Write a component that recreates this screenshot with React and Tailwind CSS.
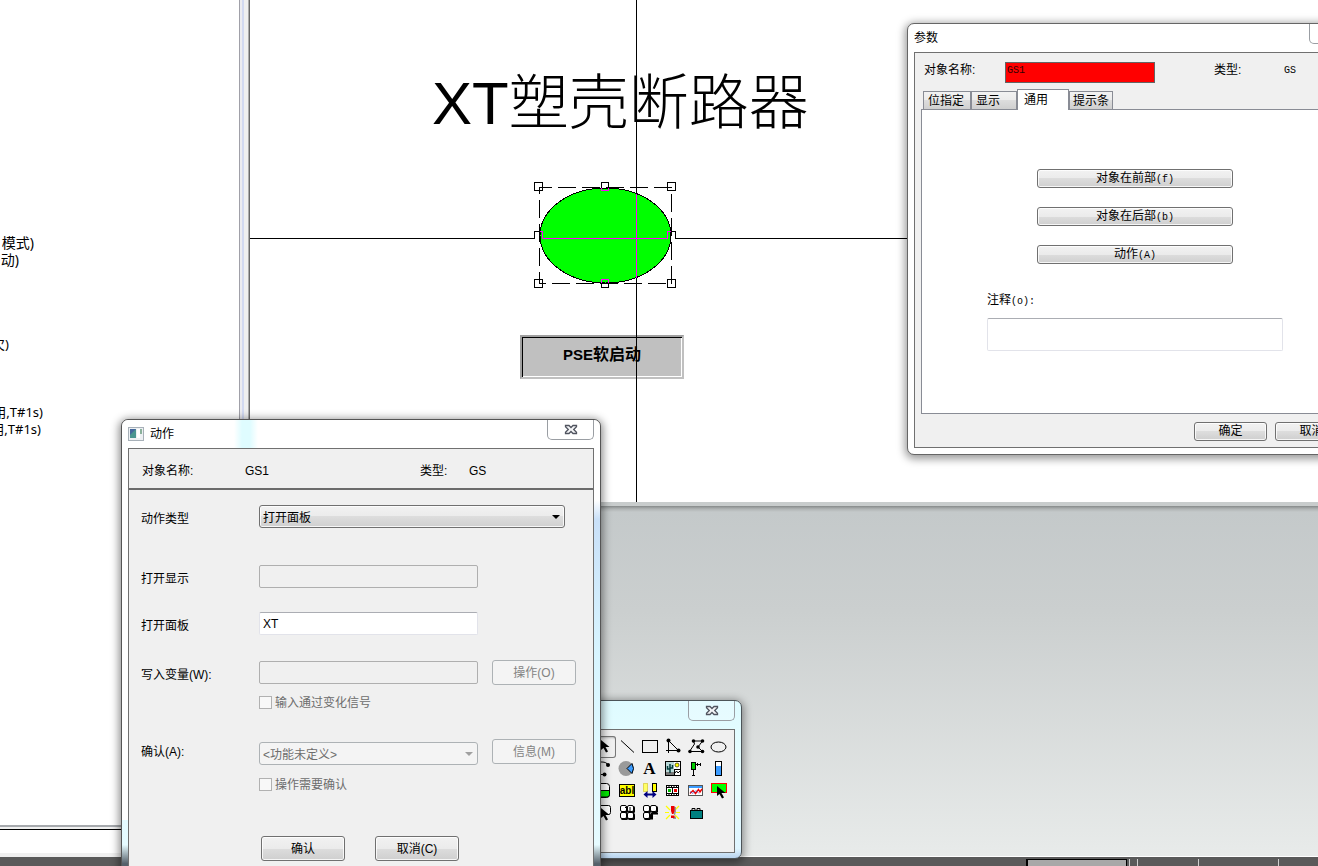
import React from "react";

const codeLines = [
  { text: "模式)", width: "w-[34px] text-sm leading-[17px]" },
  { text: "动)", width: "w-[19px] text-sm leading-[17px]" },
  null,
  null,
  null,
  null,
  { text: "欠)", width: "w-[9px]" },
  null,
  null,
  null,
  { text: "用,T#1s)", width: "w-[43px]" },
  { text: "用,T#1s)", width: "w-[41px]" },
];

const ARROW = "M0 0v10l2.500-2 2.500 4.500 2-1-2.500-4.500h4z";

function Pointer({ x, y }) {
  return <path d={ARROW} transform={`translate(${x} ${y})`} fill="#000" />;
}

function Tiles() {
  return (
    <g>
      <g fill="#000">
        <rect x="5" y="4" width="7" height="7" rx="1.500" />
        <rect x="12" y="4" width="7" height="7" rx="1.500" />
        <rect x="5" y="11" width="7" height="7" rx="1.500" />
      </g>
      <g fill="#fff" stroke="#000">
        <rect x="4.500" y="3.500" width="6" height="6" rx="1.500" />
        <rect x="11.500" y="3.500" width="6" height="6" rx="1.500" />
        <rect x="4.500" y="10.500" width="6" height="6" rx="1.500" />
      </g>
    </g>
  );
}

const tools = [
  {
    name: "选择",
    active: true,
    art: <Pointer x={8} y={4} />,
  },
  { name: "直线", art: <path d="M5 4.500 18 16.500" stroke="#000" /> },
  { name: "矩形", art: <rect x="3.500" y="4.500" width="15" height="12" fill="none" stroke="#000" /> },
  {
    name: "折线",
    art: (
      <g>
        <path d="M6.500 4v13M4 14.500h14M6.500 4.500l10 10" stroke="#000" fill="none" />
        <circle cx="6.500" cy="4.500" r="2" />
        <circle cx="16.500" cy="14.500" r="2" />
      </g>
    ),
  },
  {
    name: "多边形",
    art: (
      <g>
        <path d="M17.500 5H8.500l1 3-5 7.500h13L13 11z" stroke="#000" fill="none" />
        <circle cx="8.500" cy="5" r="1.800" />
        <circle cx="17.500" cy="5" r="1.800" />
        <circle cx="13" cy="11" r="1.800" />
        <circle cx="17.500" cy="15.500" r="1.800" />
        <circle cx="5" cy="15.500" r="1.800" />
      </g>
    ),
  },
  { name: "椭圆", art: <ellipse cx="10.500" cy="11" rx="7.500" ry="5" fill="none" stroke="#000" /> },
  {
    name: "圆弧",
    art: (
      <g>
        <path d="M5 4h4c3 0 5 1 6 3M5 16.500h6" stroke="#000" fill="none" />
        <circle cx="15" cy="7" r="2" />
        <circle cx="11.500" cy="16.500" r="2" />
      </g>
    ),
  },
  {
    name: "扇形",
    art: (
      <g>
        <circle cx="10" cy="10.500" r="7.500" fill="#9a9a9a" />
        <path d="M11 10.500 16 5.500q3 5 0 10z" fill="#3b9bff" stroke="#000" />
      </g>
    ),
  },
  {
    name: "文本",
    art: (
      <text x="10.500" y="16" textAnchor="middle" className="font-['Liberation_Serif',serif] text-[17px] font-bold">
        A
      </text>
    ),
  },
  {
    name: "图片",
    art: (
      <g>
        <rect x="3.500" y="3.500" width="15" height="14" fill="#fff" stroke="#000" />
        <path d="M4 4h8v10H4z" fill="#b8d8d8" />
        <path d="M4 14h8v3H4z" fill="#777" />
        <path d="M8 15V6M5.500 8v3H8M10.500 7v3H8" stroke="#003c3c" strokeWidth="1.500" fill="none" />
        <circle cx="15" cy="7" r="2" fill="#ff0" stroke="#000" strokeWidth=".6" />
        <path d="M12.500 11v6M12 11.500h6M13 15l1.500-2 1.500 2 2-2" stroke="#000" fill="none" />
      </g>
    ),
  },
  {
    name: "阀门",
    art: (
      <g>
        <path d="M8.500 10v7M7 17.500h3M10 6.500h6M12.500 5v3M15.500 5v3" stroke="#000" fill="none" />
        <rect x="6.500" y="4.500" width="4" height="7" fill="#0c0" stroke="#000" />
      </g>
    ),
  },
  {
    name: "棒图",
    art: (
      <g>
        <rect x="7.500" y="3.500" width="6" height="14" fill="#fff" stroke="#000" />
        <path d="M8 8h5v9H8z" fill="#3b9bff" />
      </g>
    ),
  },
  {
    name: "按钮",
    art: (
      <g>
        <rect x="2.500" y="3.500" width="14" height="14" rx="3" fill="#fff" stroke="#000" />
        <path d="M3 10.500h13.500v4q0 2.500-2.500 2.500H3z" fill="#0e0" stroke="#000" />
      </g>
    ),
  },
  {
    name: "输入框",
    art: (
      <g>
        <rect x="3.500" y="4.500" width="15" height="12" fill="#ff0" stroke="#000" />
        <text x="11" y="14" textAnchor="middle" className="font-['Liberation_Sans',sans-serif] text-[10px] font-bold">
          abl
        </text>
      </g>
    ),
  },
  {
    name: "移动",
    art: (
      <g>
        <rect x="4.500" y="3.500" width="4" height="8" fill="#ff6" stroke="#c8b400" strokeDasharray="1 1" />
        <rect x="13.500" y="3.500" width="4" height="8" fill="#ff0" stroke="#000" />
        <path d="m4.500 14.500 4-3.500v2.500h5V11l4 3.500-4 3.500v-2.500h-5V18z" fill="#000080" />
      </g>
    ),
  },
  {
    name: "动画",
    art: (
      <g>
        <path d="M4 5h13v11H4z" fill="#000" />
        <path d="M5 6.500h11M5 14.500h11" stroke="#fff" strokeDasharray="1.500 1" />
        <path d="M5 8h5v5H5zM11 8h5v5h-5z" fill="#fff" />
        <path d="M6 9h3v3H6z" fill="#0b0" />
        <path d="M12 9h3v3h-3z" fill="#e00" />
      </g>
    ),
  },
  {
    name: "趋势",
    art: (
      <g>
        <rect x="3.500" y="5.500" width="14" height="10" fill="#fff" stroke="#555" />
        <path d="M4 6h13v2H4z" fill="#3b9bff" />
        <path d="m5 13.500 3-3 2.500 3 3-4 1.500 2.500 2-3" stroke="#e00" strokeWidth="1.400" fill="none" />
        <path d="m5 11.500 3 2 3-3 3 3" stroke="#24c" strokeWidth=".6" fill="none" />
      </g>
    ),
  },
  {
    name: "触发区",
    art: (
      <g>
        <rect x="3.500" y="3.500" width="15" height="9" fill="#0f0" stroke="#f00" />
        <Pointer x={9} y={6} />
      </g>
    ),
  },
  {
    name: "点击按钮",
    art: (
      <g>
        <rect x="2.500" y="3.500" width="15" height="9" rx="2" fill="#fff" stroke="#000" />
        <Pointer x={8} y={6} />
      </g>
    ),
  },
  {
    name: "单选组",
    art: (
      <g>
        <Tiles />
        <rect x="12" y="11" width="7" height="7" rx="1.500" fill="#000" />
        <rect x="11.500" y="10.500" width="6" height="6" rx="1.500" fill="#fff" stroke="#000" />
        <path d="m9 5 3 3-3 2M14 5v4" stroke="#000" fill="none" />
      </g>
    ),
  },
  {
    name: "复选组",
    art: (
      <g>
        <Tiles />
        <path d="M12 11h7v1.500h-5v5h-2z" fill="#000" />
        <path d="M15 13.500h3M15 15.500h2" stroke="#fff" />
      </g>
    ),
  },
  {
    name: "报警",
    art: (
      <g>
        <path
          d="m4 4 4 4M17 4l-4 4M3 10.500h4M14 10.500h4M4 17l4-4M17 17l-4-4"
          stroke="#ff0"
          strokeWidth="1.200"
        />
        <path d="M11 5h3v5l-1 3h-1zM11 14.500h3V17h-3z" fill="#999" />
        <path d="M9 4h3.500v5l-1 3h-1.500l-1-3zM9 13.500h3.500V16H9z" fill="#e00" />
      </g>
    ),
  },
  {
    name: "工具箱",
    art: (
      <g>
        <path d="M7 8.500v-2h3v2M12 8.500v-2h3v2" fill="#ddd" stroke="#000" />
        <rect x="5.500" y="8.500" width="12" height="8" fill="#008080" stroke="#000" />
      </g>
    ),
  },
];

function CloseButton() {
  return (
    <button
      type="button"
      aria-label="关闭"
      className="flex h-5 w-[47px] items-center justify-center rounded-b-[5px] border border-t-0 border-[#9a9ea3] bg-white/20"
    >
      <svg width="14" height="11" viewBox="0 0 14 11">
        <path
          d="M1.500 1.500H5L7 3.500 9 1.500h3.500v1.200L9.700 5.500l2.800 2.800v1.200H9L7 7.500 5 9.500H1.500V8.300L4.300 5.500 1.500 2.700z"
          fill="#f4f5f7"
          stroke="#50545f"
          strokeWidth="1.300"
        />
      </svg>
    </button>
  );
}

const buttonFace =
  "rounded-[3px] border border-[#707070] bg-[linear-gradient(#f2f2f2_0%,#ebebeb_50%,#dddddd_50%,#cfcfcf_100%)] shadow-[inset_0_0_0_1px_rgba(255,255,255,0.8)]";
const buttonOff = "rounded-[3px] border border-[#adb2b5] bg-[#f4f4f4] text-[#838383]";

function Mono({ children }) {
  return <span className="font-['Liberation_Mono',monospace] text-[10px]">{children}</span>;
}

function ParamsWindow() {
  return (
    <section className="absolute left-[907px] top-[23px] w-[456px] rounded-[7px] border border-[#666] bg-white px-[6px] pb-[6px] text-xs shadow-[0_2px_8px_2px_rgba(0,0,0,0.4)]">
      <header className="flex h-7 items-start justify-between">
        <h2 className="leading-7">参数</h2>
        <CloseButton />
      </header>
      <div className="border border-[#707070] bg-[#f0f0f0] pb-[6px]">
        <div className="flex h-[30px] items-center pl-[9px] pt-[9px]">
          <label htmlFor="object-name" className="w-[81px] pb-[6px]">
            对象名称:
          </label>
          <input
            id="object-name"
            defaultValue="GS1"
            className="h-[21px] w-[150px] border border-[#646464] bg-[#f00] px-px pb-1 font-['Liberation_Mono',monospace] text-[10px] text-[#300]"
          />
          <span className="ml-[59px] w-[70px] pb-[6px]">类型:</span>
          <span className="pb-[6px]">
            <Mono>GS</Mono>
          </span>
        </div>
        <div role="tablist" className="mt-[6px] flex h-5 items-end pl-2">
          {[
            ["位指定", "w-[48px]"],
            ["显示", "w-[46px]"],
          ].map(([name, width]) => (
            <button
              key={name}
              type="button"
              role="tab"
              className={`${width} h-[18px] border border-b-0 border-[#898c95] bg-[linear-gradient(#f2f2f2_0%,#ebebeb_50%,#dddddd_50%,#cfcfcf_100%)] px-1 text-left`}
            >
              {name}
            </button>
          ))}
          <button
            type="button"
            role="tab"
            aria-selected="true"
            className="z-10 -mb-px h-[21px] w-[52px] border border-b-0 border-[#898c95] bg-white px-[6px] text-left"
          >
            通用
          </button>
          <button
            type="button"
            role="tab"
            className="h-[18px] w-[44px] border border-b-0 border-[#898c95] bg-[linear-gradient(#f2f2f2_0%,#ebebeb_50%,#dddddd_50%,#cfcfcf_100%)] px-[3px] text-left"
          >
            提示条
          </button>
        </div>
        <div
          role="tabpanel"
          className="mx-[6px] flex flex-col items-center border border-[#898c95] bg-white pb-[62px] pt-[59px]"
        >
          <div className="flex w-[196px] flex-col gap-[19px]">
            {[
              ["对象在前部", "(f)"],
              ["对象在后部", "(b)"],
              ["动作", "(A)"],
            ].map(([name, key]) => (
              <button key={key} type="button" className={`${buttonFace} h-[19px] leading-[17px]`}>
                {name}
                <Mono>{key}</Mono>
              </button>
            ))}
          </div>
          <div className="mt-[27px] flex w-[296px] flex-col gap-[7px]">
            <label htmlFor="comment" className="leading-[18px]">
              注释<Mono>(o):</Mono>
            </label>
            <input
              id="comment"
              className="h-[33px] rounded-[2px] border border-[#e2e3ea] border-t-[#abadb3] bg-white px-1"
            />
          </div>
        </div>
        <div className="mt-2 flex justify-end gap-2 pr-[7px]">
          <button type="button" className={`${buttonFace} h-[19px] w-[73px] leading-[17px]`}>
            确定
          </button>
          <button type="button" className={`${buttonFace} h-[19px] w-[73px] leading-[17px]`}>
            取消
          </button>
        </div>
      </div>
    </section>
  );
}

function ToolWindow() {
  return (
    <section className="absolute left-[580px] top-[700px] w-[162px] rounded-[7px] border border-[#4c5458] bg-[linear-gradient(#dffbff_0%,#e8feff_50%,#dff5ff_94%,#b9d3ee_100%)] px-[6px] pb-[5px] shadow-[0_2px_8px_2px_rgba(0,0,0,0.4)]">
      <header className="flex h-7 justify-end">
        <CloseButton />
      </header>
      <div className="grid grid-cols-[repeat(6,23px)] border border-[#707070] bg-[#f0f0f0] pb-[28px] pl-[5px] pt-[6px]">
        {tools.map((tool) => (
          <button
            key={tool.name}
            type="button"
            aria-label={tool.name}
            className={
              tool.active
                ? "h-[22px] rounded-[3px] shadow-[inset_0_0_0_1px_#777,inset_0_2px_2px_#bbb]"
                : "h-[22px]"
            }
          >
            <svg width="23" height="22" viewBox="0 0 23 22">
              {tool.art}
            </svg>
          </button>
        ))}
      </div>
    </section>
  );
}

const fieldOff = "h-[23px] w-[219px] rounded-[2px] border border-[#afafaf] bg-[#f0f0f0] px-[3px]";

function ActionWindow() {
  return (
    <section className="absolute left-[121px] top-[419px] w-[480px] rounded-[7px] border border-[#555] bg-white bg-[linear-gradient(90deg,#fff_50%,transparent_50%),linear-gradient(#ffffff_0%,#ffffff_17%,#c9e0f8_21%,#d8f5ff_50%,#e6fbff_90%,#55606a_94%)] bg-[length:100%_400px,100%_100%] bg-no-repeat px-[6px] pb-[6px] text-xs shadow-[0_2px_8px_2px_rgba(0,0,0,0.45)]">
      <header className="-mx-[6px] flex h-7 items-start rounded-t-[7px] bg-[linear-gradient(90deg,#fff_112px,#dffcff_120px,#dffcff_128px,#fff_136px)] px-[6px]">
        <svg width="16" height="14" viewBox="0 0 16 14" className="mt-[7px]">
          <rect x=".5" y=".5" width="15" height="13" fill="#edf0f3" stroke="#a7b0b8" />
          <rect x="2" y="2" width="6" height="9" fill="#4a9590" />
          <path d="M2 2h6L2 8z" fill="#44679c" />
          <path d="M9 2h3v9H9z" fill="#fff" />
          <path d="M12 2h2v5h-2z" fill="#8bb19b" />
        </svg>
        <h2 className="ml-[6px] flex-1 leading-7">动作</h2>
        <CloseButton />
      </header>
      <div className="border border-[#707070] bg-[#f0f0f0]">
        <div className="flex h-[41px] items-center border-b-2 border-[#6b6b6b] pl-[13px] pt-1">
          <span className="w-[103px]">对象名称:</span>
          <span className="w-[175px]">GS1</span>
          <span className="w-[49px]">类型:</span>
          <span>GS</span>
        </div>
        <form className="flex flex-col pb-6 pl-3 pt-[15px]" onSubmit={(e) => e.preventDefault()}>
          <div className="flex items-center">
            <label htmlFor="action-type" className="w-[118px] pt-1">
              动作类型
            </label>
            <div className="grid w-[306px] items-center">
              <select
                id="action-type"
                className={`${buttonFace} col-start-1 row-start-1 h-[23px] appearance-none pl-[3px] pt-[2px]`}
              >
                <option>打开面板</option>
              </select>
              <svg
                width="8"
                height="4"
                viewBox="0 0 8 4"
                className="pointer-events-none col-start-1 row-start-1 mr-[5px] justify-self-end"
              >
                <path d="M0 0h8L4 4z" />
              </svg>
            </div>
          </div>
          <div className="mt-[37px] flex items-center">
            <label htmlFor="open-display" className="w-[118px] pt-1">
              打开显示
            </label>
            <input id="open-display" disabled className={fieldOff} />
          </div>
          <div className="mt-6 flex items-center">
            <label htmlFor="open-panel" className="w-[118px] pt-1">
              打开面板
            </label>
            <input
              id="open-panel"
              defaultValue="XT"
              className="h-[23px] w-[219px] rounded-[2px] border border-[#e2e3ea] border-t-[#abadb3] bg-white px-[3px]"
            />
          </div>
          <div className="mt-[25px] flex items-center">
            <label htmlFor="write-var" className="w-[118px] pt-1">
              写入变量(W):
            </label>
            <input id="write-var" disabled className={fieldOff} />
            <button type="button" disabled className={`${buttonOff} ml-[14px] h-[25px] w-[84px]`}>
              操作(O)
            </button>
          </div>
          <label className="ml-[118px] mt-2 flex h-[18px] items-center gap-[3px] text-[#6d6d6d]">
            <input
              type="checkbox"
              disabled
              className="size-[13px] appearance-none border border-[#b1b1b1] bg-[#f8f8f8]"
            />
            <span className="pt-[2px]">输入通过变化信号</span>
          </label>
          <div className="mt-7 flex h-[26px] items-end">
            <label htmlFor="confirm" className="w-[118px] self-center">
              确认(A):
            </label>
            <div className="grid w-[219px] items-center">
              <select
                id="confirm"
                disabled
                className="col-start-1 row-start-1 h-[23px] appearance-none rounded-[3px] border border-[#adb2b5] bg-[#f4f4f4] pl-[3px] pt-[2px] text-[#6d6d6d] opacity-100"
              >
                <option>&lt;功能未定义&gt;</option>
              </select>
              <svg
                width="8"
                height="4"
                viewBox="0 0 8 4"
                className="pointer-events-none col-start-1 row-start-1 mr-[5px] justify-self-end"
              >
                <path d="M0 0h8L4 4z" fill="#a0a0a0" />
              </svg>
            </div>
            <button type="button" disabled className={`${buttonOff} ml-[14px] h-[25px] w-[84px] self-start`}>
              信息(M)
            </button>
          </div>
          <label className="ml-[118px] mt-[10px] flex h-[18px] items-center gap-[3px] text-[#6d6d6d]">
            <input
              type="checkbox"
              disabled
              className="size-[13px] appearance-none border border-[#b1b1b1] bg-[#f8f8f8]"
            />
            <span className="pt-[2px]">操作需要确认</span>
          </label>
          <div className="ml-[120px] mt-[43px] flex gap-[30px]">
            <button type="submit" className={`${buttonFace} h-[25px] w-[84px]`}>
              确认
            </button>
            <button type="button" className={`${buttonFace} h-[25px] w-[84px]`}>
              取消(C)
            </button>
          </div>
        </form>
      </div>
    </section>
  );
}

function SelectedEllipse() {
  return (
    <svg width="150" height="112" viewBox="530 180 150 112" shapeRendering="crispEdges" className="absolute left-[280px] top-[180px]">
      <path d="M534 238h9v1h-9zM668 238h8v1h-8z" fill="#fff" />
      <ellipse cx="605.500" cy="235.500" rx="65.500" ry="47.500" fill="#0f0" stroke="#000" />
      <rect x="539.500" y="187.500" width="132" height="96" fill="none" stroke="#000" strokeDasharray="18 6" strokeDashoffset="6" />
      <path d="M543 238.500h125M636.500 194v84" stroke="#f0f" />
      <g fill="none" stroke="#000">
        <rect x="534.500" y="182.500" width="8" height="8" />
        <rect x="667.500" y="182.500" width="8" height="8" />
        <rect x="534.500" y="279.500" width="8" height="8" />
        <rect x="667.500" y="279.500" width="8" height="8" />
        <path d="M601.500 187.500v-5h7v5M601.500 283.500v4h7v-4M540 231.500h-5.500v7M670 231.500h5.500v7" />
      </g>
      <path
        d="M601.500 188v2.500h7V188M601.500 283v-3.500h7v3.500M540 231.500h2.500v7M671 231.500h-3.500v7"
        fill="none"
        stroke="#f0f"
      />
    </svg>
  );
}

export default function App() {
  return (
    <div className="relative flex h-screen flex-col overflow-hidden bg-white font-['Liberation_Sans','Noto_Sans_CJK_SC',sans-serif] text-black">
      <div className="flex min-h-0 flex-1">
        <aside className="flex w-[239px] flex-col">
          <div className="flex-1 pt-[234px] font-['Noto_Sans','Noto_Sans_CJK_SC',sans-serif] text-[13px] leading-[17px]">
            {codeLines.map((line, i) => (
              <div key={i} className="h-[17px]">
                {line && (
                  <div className={`${line.width} flex justify-end whitespace-nowrap`}>{line.text}</div>
                )}
              </div>
            ))}
          </div>
          <div className="h-[5px] border-b border-t-2 border-b-black border-t-[#a6a9ad] bg-[#f0f0f0]" />
          <div className="h-[23px]" />
          <div className="h-1 bg-[#f0f0f0]" />
        </aside>
        <div className="w-[11px] bg-[linear-gradient(90deg,#a0a0a8_1px,#ececf0_1px,#ececf0_3px,#d2d9f0_3px,#d2d9f0_5px,#efefef_5px,#efefef_9px,#696969_10px)]" />
        <main className="flex min-w-0 flex-1 flex-col">
          <div className="relative h-[502px] overflow-hidden bg-white">
            <h1 className="absolute left-[182px] top-[68px] whitespace-nowrap text-[60px] font-light leading-[72px]">
              XT塑壳断路器
            </h1>
            <button
              type="button"
              className="absolute left-[270px] top-[335px] h-11 w-[164px] border-2 border-[#c0c0c0] border-l-[#a0a0a0] border-t-[#a0a0a0] bg-[#c0c0c0] pb-1 text-[15px] font-bold shadow-[inset_1px_1px_0_#000,inset_-1px_-1px_0_#fff]"
            >
              PSE<span className="text-base">软启动</span>
            </button>
            <div className="absolute left-0 right-0 top-[238px] h-px bg-black" />
            <div className="absolute bottom-0 left-[386px] top-0 w-px bg-black" />
            <SelectedEllipse />
          </div>
          <div className="h-1 bg-[#c8cccc]" />
          <div className="flex-1 bg-[linear-gradient(#858989_0px,#b0b4b4_3px,#c4c9ca_6px,#cbcfcf_30%,#e8ebea_100%)]" />
          <div className="h-px bg-white" />
        </main>
      </div>
      <footer className="flex h-[9px] justify-end gap-[60px] bg-[#5a5a5a] pr-[39px] pt-[2px]">
        <div className="flex">
          <div className="w-[101px] border-l-2 border-r border-t border-black bg-[#a8a8a8]" />
          <div className="ml-[2px] w-2 border-l border-[#d0d0d0]" />
          <div className="border-l border-[#d0d0d0]" />
        </div>
        <div className="border-l border-[#d0d0d0]" />
        <div className="ml-[19px] border-l border-[#d0d0d0]" />
      </footer>
      <ParamsWindow />
      <ToolWindow />
      <ActionWindow />
    </div>
  );
}
